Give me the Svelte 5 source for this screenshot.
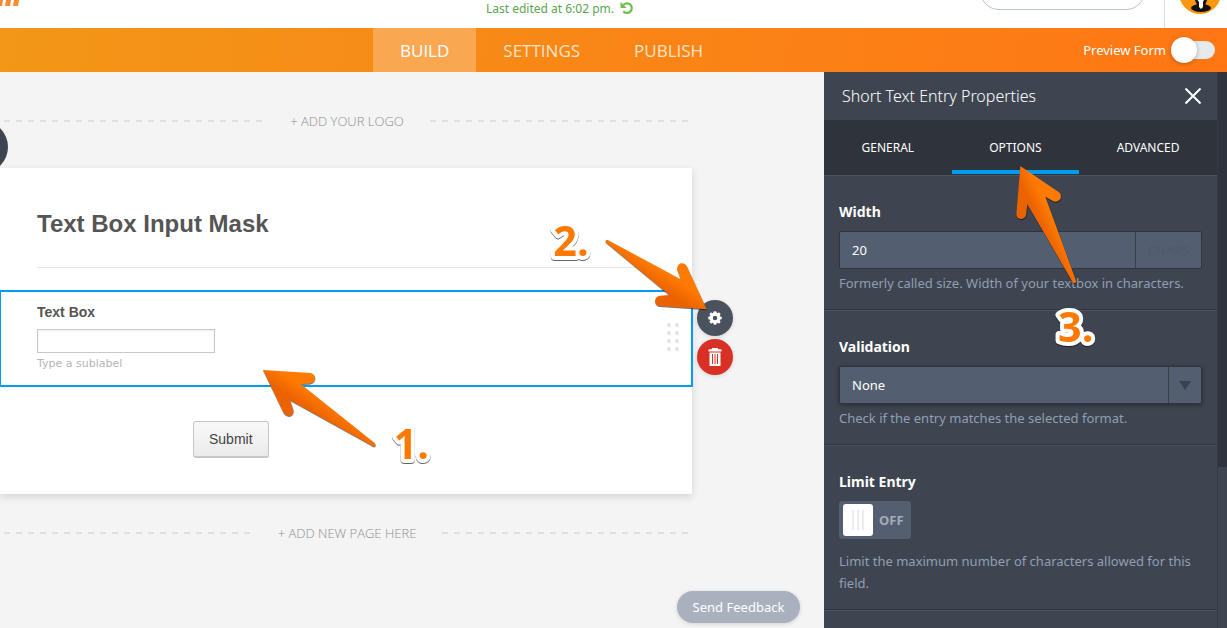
<script lang="ts">
    let mainTab = "BUILD";
    let panelTab = "OPTIONS";
    let previewForm = false;
    let limitEntry = false;
    let fieldValue = "";
    let fieldWidth = "20";
    let validation = "None";

    const mainTabs = ["BUILD", "SETTINGS", "PUBLISH"];
    const panelTabs = ["GENERAL", "OPTIONS", "ADVANCED"];
    const validations = ["None", "Alphabetic", "Alphanumeric", "Email", "Numeric", "URL"];
    const gearTeeth = [0, 45, 90, 135, 180, 225, 270, 315];
</script>

<div class="page">
    <header class="topbar">
        <a class="logo" href="#home" aria-label="Home">
            <svg width="20" height="24" viewBox="0 0 20 24">
                <path d="M1 0h5L2 24h-5zM9 0h5l-4 24H5zM17 0h5l-4 24h-5z" fill="#fb8a33" />
            </svg>
        </a>
        <p class="status">
            Last edited at 6:02 pm.
            <svg width="14" height="14" viewBox="0 0 14 14">
                <path d="M3.500 3.800a4.800 4.800 0 1 1-.2 6.400" fill="none" stroke="#6cc04a" stroke-width="2.200" />
                <path d="M.500 1v6h6l-2-2.200-2-2z" fill="#6cc04a" />
            </svg>
        </p>
        <input class="search" type="search" aria-label="Search" />
        <div class="account">
            <svg width="42" height="42" viewBox="0 0 42 42">
                <circle cx="21" cy="21" r="21" fill="#f9980f" />
                <ellipse cx="22" cy="36" rx="10" ry="4" fill="#111" />
                <path d="M15 26h14l-3 7h-8z" fill="#111" />
                <path d="M17 26h9l-2 4v5l-2 2-2-2v-5z" fill="#fff" />
            </svg>
        </div>
    </header>

    <nav class="navbar">
        <div class="tabs">
            {#each mainTabs as tab}
                <button class:active={mainTab === tab} on:click={() => (mainTab = tab)}>{tab}</button>
            {/each}
        </div>
        <label class="preview">
            Preview Form
            <input type="checkbox" bind:checked={previewForm} />
        </label>
    </nav>

    <main>
        <section class="canvas">
            <button class="add-element" aria-label="Add form element"></button>

            <button class="divider top">+ ADD YOUR LOGO</button>

            <form class="card" on:submit|preventDefault>
                <h1>Text Box Input Mask</h1>

                <div class="field">
                    <div class="field-body">
                        <label for="text-box">Text Box</label>
                        <input id="text-box" type="text" bind:value={fieldValue} />
                        <small>Type a sublabel</small>
                    </div>
                    <svg class="handle" width="12" height="28" viewBox="0 0 12 28" fill="#e3e3e3">
                        {#each [2, 10, 18, 26] as y}
                            <circle cx="2" cy={y} r="2" />
                            <circle cx="10" cy={y} r="2" />
                        {/each}
                    </svg>
                    <div class="tools">
                        <button type="button" class="tool" aria-label="Properties">
                            <svg width="14" height="14" viewBox="-7 -7 14 14" fill="#fff">
                                {#each gearTeeth as angle}
                                    <rect x="-1.500" y="-6.800" width="3" height="4" rx="1" transform="rotate({angle})" />
                                {/each}
                                <circle r="3.800" fill="none" stroke="#fff" stroke-width="3.200" />
                            </svg>
                        </button>
                        <button type="button" class="tool delete" aria-label="Delete">
                            <svg width="14" height="18" viewBox="0 0 14 18">
                                <path d="M.500 3.500v-2L4 1V0h6v1l3.500.500v2zM1.500 4.500h11V18h-11z" fill="#fff" />
                                <path d="M4.500 6v10M7 6v10M9.500 6v10" stroke="#d93025" />
                            </svg>
                        </button>
                    </div>
                </div>

                <button class="submit">Submit</button>
            </form>

            <button class="divider bottom">+ ADD NEW PAGE HERE</button>

            <svg class="note note-1" width="180" height="104" viewBox="240 48 540 312">
                <defs>
                    <linearGradient id="shade-1" gradientUnits="userSpaceOnUse" x1="374" y1="114" x2="348" y2="152">
                        <stop offset="0" stop-color="#ff7a00" />
                        <stop offset="1" stop-color="#ea6300" />
                    </linearGradient>
                </defs>
                <path class="arrow" fill="url(#shade-1)" d="M249 60 391 69Q405 72 405 84Q403 99 388 101L362 102 583 278Q590 286 582 290L330 151 340 180Q341 194 328 198Q317 199 311 189Z" />
                <text x="641" y="326">1.</text>
            </svg>

            <svg class="note note-2" width="164" height="90" viewBox="48 36 492 270">
                <defs>
                    <linearGradient id="shade-2" gradientUnits="userSpaceOnUse" x1="432" y1="206" x2="408" y2="244">
                        <stop offset="0" stop-color="#ff7a00" />
                        <stop offset="1" stop-color="#ea6300" />
                    </linearGradient>
                </defs>
                <path class="arrow" fill="url(#shade-2)" d="M232 89 452 208 442 180Q440 164 453 160Q465 158 471 170L530 298 388 288Q375 285 375 272Q377 259 391 257L418 255 227 97Q225 89 232 89Z" />
                <text x="70" y="137">2.</text>
            </svg>

            <button class="feedback">Send Feedback</button>
        </section>

        <aside class="panel">
            <div class="panel-content">
                <div class="panel-header">
                    <h2>Short Text Entry Properties</h2>
                    <button class="close" aria-label="Close">
                        <svg width="16" height="16" viewBox="0 0 16 16">
                            <path d="M.5.500l15 15M15.500.500l-15 15" stroke="#fff" stroke-width="2" />
                        </svg>
                    </button>
                </div>

                <div class="panel-tabs">
                    {#each panelTabs as tab}
                        <button class:active={panelTab === tab} on:click={() => (panelTab = tab)}>{tab}</button>
                    {/each}
                </div>

                <div class="property">
                    <label for="width">Width</label>
                    <div class="control">
                        <input id="width" type="text" bind:value={fieldWidth} />
                        <span class="unit">CHARS</span>
                    </div>
                    <p>Formerly called size. Width of your textbox in characters.</p>
                </div>

                <div class="property">
                    <label for="validation">Validation</label>
                    <div class="control raised">
                        <select id="validation" bind:value={validation}>
                            {#each validations as option}
                                <option>{option}</option>
                            {/each}
                        </select>
                        <span class="caret">
                            <svg width="12" height="9" viewBox="0 0 12 9"><path d="M0 0h12L6 9z" fill="#3b424d" /></svg>
                        </span>
                    </div>
                    <p>Check if the entry matches the selected format.</p>
                </div>

                <div class="property">
                    <label for="limit">Limit Entry</label>
                    <div class="toggle" class:on={limitEntry}>
                        <input id="limit" type="checkbox" bind:checked={limitEntry} />
                        <span>{limitEntry ? "ON" : "OFF"}</span>
                    </div>
                    <p class="spaced">Limit the maximum number of characters allowed for this field.</p>
                </div>

                <div class="property"></div>
            </div>

            <div class="scroll-track">
                <div class="scroll-thumb"></div>
            </div>

            <svg class="note note-3" width="87" height="189" viewBox="555 9 261 567">
                <defs>
                    <linearGradient id="shade-3" gradientUnits="userSpaceOnUse" x1="650" y1="118" x2="612" y2="136">
                        <stop offset="0" stop-color="#ff7a00" />
                        <stop offset="1" stop-color="#ea6300" />
                    </linearGradient>
                </defs>
                <path class="arrow" fill="url(#shade-3)" d="M580 18 698 98Q704 107 700 117Q691 128 679 124L655 110 748 365Q744 372 738 368L601 133 597 165Q594 177 581 177Q568 175 568 162Z" />
                <text x="693" y="546">3.</text>
            </svg>
        </aside>
    </main>
</div>

<style>
    :global(body) {
        margin: 0;
    }

    .page {
        display: flex;
        flex-direction: column;
        min-height: 100vh;
        font-family: "Noto Sans", "Open Sans", sans-serif;
        font-size: 13px;
        color: #fff;
        background: #f4f4f4;
    }

    .page :global(*) {
        box-sizing: border-box;
    }

    button,
    input,
    select {
        font: inherit;
        color: inherit;
        margin: 0;
        padding: 0;
        border: none;
        background: none;
        appearance: none;
    }

    button,
    select {
        cursor: pointer;
    }

    svg {
        display: block;
    }

    h1,
    h2,
    p {
        margin: 0;
    }

    /* header */
    .topbar {
        display: flex;
        align-items: flex-end;
        height: 28px;
        overflow: hidden;
        background: #fff;
    }

    .logo {
        flex: 0 0 486px;
        padding-bottom: 22px;
    }

    .status {
        display: flex;
        align-items: center;
        gap: 6px;
        padding-bottom: 9px;
        font-size: 12px;
        line-height: 20px;
        color: #5aa650;
    }

    .status svg {
        margin-bottom: 3px;
    }

    .search {
        width: 165px;
        height: 38px;
        margin: 0 19px 18px auto;
        border: 1px solid #b8c4ca;
        border-radius: 19px;
    }

    .account {
        padding: 0 6px 14px 14px;
        border-left: 1px solid #dcdfe2;
    }

    .navbar {
        display: flex;
        justify-content: space-between;
        height: 44px;
        padding: 0 12px 0 373px;
        background: linear-gradient(100deg, #f29718, #f98616 50%, #ff7614);
    }

    .tabs {
        display: flex;
    }

    .tabs button {
        padding: 0 27px;
        font-family: "Open Sans", sans-serif;
        font-size: 17px;
        color: #ffe3c7;
    }

    .tabs button.active {
        color: #fff;
        background: #f9a751;
    }

    .preview {
        display: flex;
        align-items: center;
        gap: 5px;
    }

    .preview input {
        display: flex;
        align-items: center;
        width: 44px;
        height: 18px;
        border-radius: 9px;
        background: linear-gradient(90deg, transparent 9px, #e6eaec 9px);
    }

    .preview input::before {
        content: "";
        width: 26px;
        height: 26px;
        flex: none;
        border-radius: 50%;
        background: #fff;
        box-shadow: 0 1px 4px #0004;
    }

    .preview input:checked {
        justify-content: flex-end;
    }

    main {
        display: flex;
        flex: 1;
    }

    /* form canvas */
    .canvas {
        position: relative;
        flex: 1;
        min-width: 0;
        overflow: hidden;
    }

    .add-element {
        position: absolute;
        top: 49px;
        left: -44px;
        width: 52px;
        height: 52px;
        border-radius: 50%;
        background: #3e4550;
    }

    .divider {
        display: flex;
        align-items: center;
        gap: 26px;
        width: calc(100% - 134px);
        padding-left: 4px;
        font-family: "Open Sans", sans-serif;
        font-size: 13px;
        font-weight: 300;
        color: #8f8f8f;
    }

    .divider.top {
        height: 97px;
        margin-bottom: -1px;
    }

    .divider.bottom {
        height: 77px;
    }

    .divider::before,
    .divider::after {
        content: "";
        flex: 1;
        height: 2px;
        background: repeating-linear-gradient(90deg, #e0e0e0 0 6px, transparent 6px 12px);
    }

    .card {
        margin-right: 132px;
        padding: 40px 0 36px;
        font-family: "Liberation Sans", Arial, sans-serif;
        color: #555;
        background: #fff;
        box-shadow: 0 3px 8px #0002;
    }

    h1 {
        margin: 0 37px 22px;
        padding-bottom: 27px;
        border-bottom: 1px solid #e6e6e6;
        font-size: 24px;
        line-height: 32px;
    }

    .field {
        position: relative;
        display: flex;
        align-items: center;
        justify-content: space-between;
        margin: 0 -1px;
        padding: 10px 12px 14px 36px;
        border: 2px solid #049cf2;
    }

    .field-body {
        display: flex;
        flex-direction: column;
    }

    .field-body label {
        font-size: 14px;
        font-weight: bold;
        line-height: 20px;
    }

    .field-body input {
        width: 178px;
        height: 24px;
        margin: 7px 0 4px;
        padding: 0 4px;
        border: 1px solid #c8c8c8;
        box-shadow: inset 0 1px 3px #0001;
    }

    .field-body small {
        font-family: "DejaVu Sans", sans-serif;
        font-size: 11px;
        line-height: 14px;
        color: #b5b5b5;
    }

    .tools {
        position: absolute;
        top: 8px;
        right: -42px;
        display: grid;
        gap: 3px;
    }

    .tool {
        display: grid;
        place-items: center;
        width: 36px;
        height: 36px;
        border-radius: 50%;
        background: #4a525d;
        box-shadow: 0 1px 4px #0002;
    }

    .tool.delete {
        background: #d93025;
    }

    .submit {
        display: block;
        height: 37px;
        margin: 34px 0 0 193px;
        padding: 0 15px;
        border: 1px solid #c6c6c6;
        border-bottom-width: 2px;
        border-radius: 3px;
        font-size: 14px;
        color: #444;
        background: linear-gradient(#f8f8f8, #ebebeb);
    }

    .feedback {
        position: absolute;
        right: 24px;
        bottom: 5px;
        width: 123px;
        height: 32px;
        border-radius: 16px;
        background: #aab1be;
        box-shadow: 0 1px 4px #0002;
    }

    /* properties panel */
    .panel {
        position: relative;
        display: grid;
        grid-template-columns: 1fr 10px;
        width: 403px;
        background: #3e4550;
    }

    .panel-header {
        display: flex;
        align-items: center;
        justify-content: space-between;
        height: 48px;
        padding: 0 16px 0 18px;
    }

    h2 {
        font-size: 16px;
        font-weight: 300;
        line-height: 24px;
    }

    .panel-tabs {
        display: flex;
        height: 55px;
        padding-bottom: 1px;
        background: #2f333b;
    }

    .panel-tabs button {
        flex: 1 1 auto;
        border: solid transparent;
        border-width: 4px 0;
        font-size: 12px;
        padding: 0 35px;
    }

    .panel-tabs button.active {
        border-bottom-color: #049cf2;
    }

    .property {
        padding: 25px 15px 15px;
        border-top: 1px solid #4b5462;
        border-bottom: 1px solid #303640;
        line-height: 22px;
    }

    .property:last-child {
        padding: 0;
        border-bottom: none;
    }

    .property label {
        display: block;
        margin-bottom: 8px;
        font-size: 14px;
        font-weight: bold;
    }

    .property p {
        margin-top: 3px;
        color: #929eb2;
    }

    .property p.spaced {
        margin-top: 11px;
    }

    .control {
        display: flex;
        height: 38px;
        border: 1px solid #2f343d;
        border-radius: 2px;
        background: #535e70;
    }

    .control.raised {
        box-shadow: 0 1px 4px #0006;
    }

    .control input,
    .control select {
        flex: 1;
        min-width: 0;
        padding: 0 12px;
    }

    .control option {
        background: #535e70;
    }

    .unit,
    .caret {
        display: grid;
        place-items: center;
        width: 66px;
        border-left: 1px solid #3a414c;
    }

    .unit {
        color: #4f5b6a;
    }

    .caret {
        width: 33px;
        pointer-events: none;
    }

    .toggle {
        display: flex;
        align-items: center;
        gap: 6px;
        width: 72px;
        height: 38px;
        padding: 0 4px;
        border-radius: 3px;
        font-weight: bold;
        color: #a3acb9;
        background: #535e70;
    }

    .toggle.on {
        flex-direction: row-reverse;
    }

    .toggle input {
        display: grid;
        place-items: center;
        width: 30px;
        height: 32px;
        border-radius: 3px;
        background: #fff;
    }

    .toggle input::before {
        content: "";
        width: 12px;
        height: 20px;
        background: repeating-linear-gradient(90deg, #ececec 0 2px, #fff 2px 5px);
    }

    .scroll-track {
        border-left: 1px solid #343a44;
    }

    .scroll-thumb {
        height: 71%;
        background: #2f333b;
    }

    /* tutorial arrows and step numbers */
    .note {
        position: absolute;
        overflow: visible;
        pointer-events: none;
    }

    .note-1 {
        top: 294px;
        left: 260px;
    }

    .note-2 {
        top: 150px;
        right: 114px;
    }

    .note-3 {
        top: 91px;
        left: 188px;
    }

    .note text {
        font-family: "Open Sans", sans-serif;
        font-size: 124px;
        font-weight: bold;
        fill: #ff7800;
        stroke: #fff;
        stroke-width: 24px;
        stroke-linejoin: round;
        paint-order: stroke;
        filter: drop-shadow(0 3px 2px #0009);
    }

    .arrow {
        filter: drop-shadow(1px 3px 2px #0008);
    }
</style>
